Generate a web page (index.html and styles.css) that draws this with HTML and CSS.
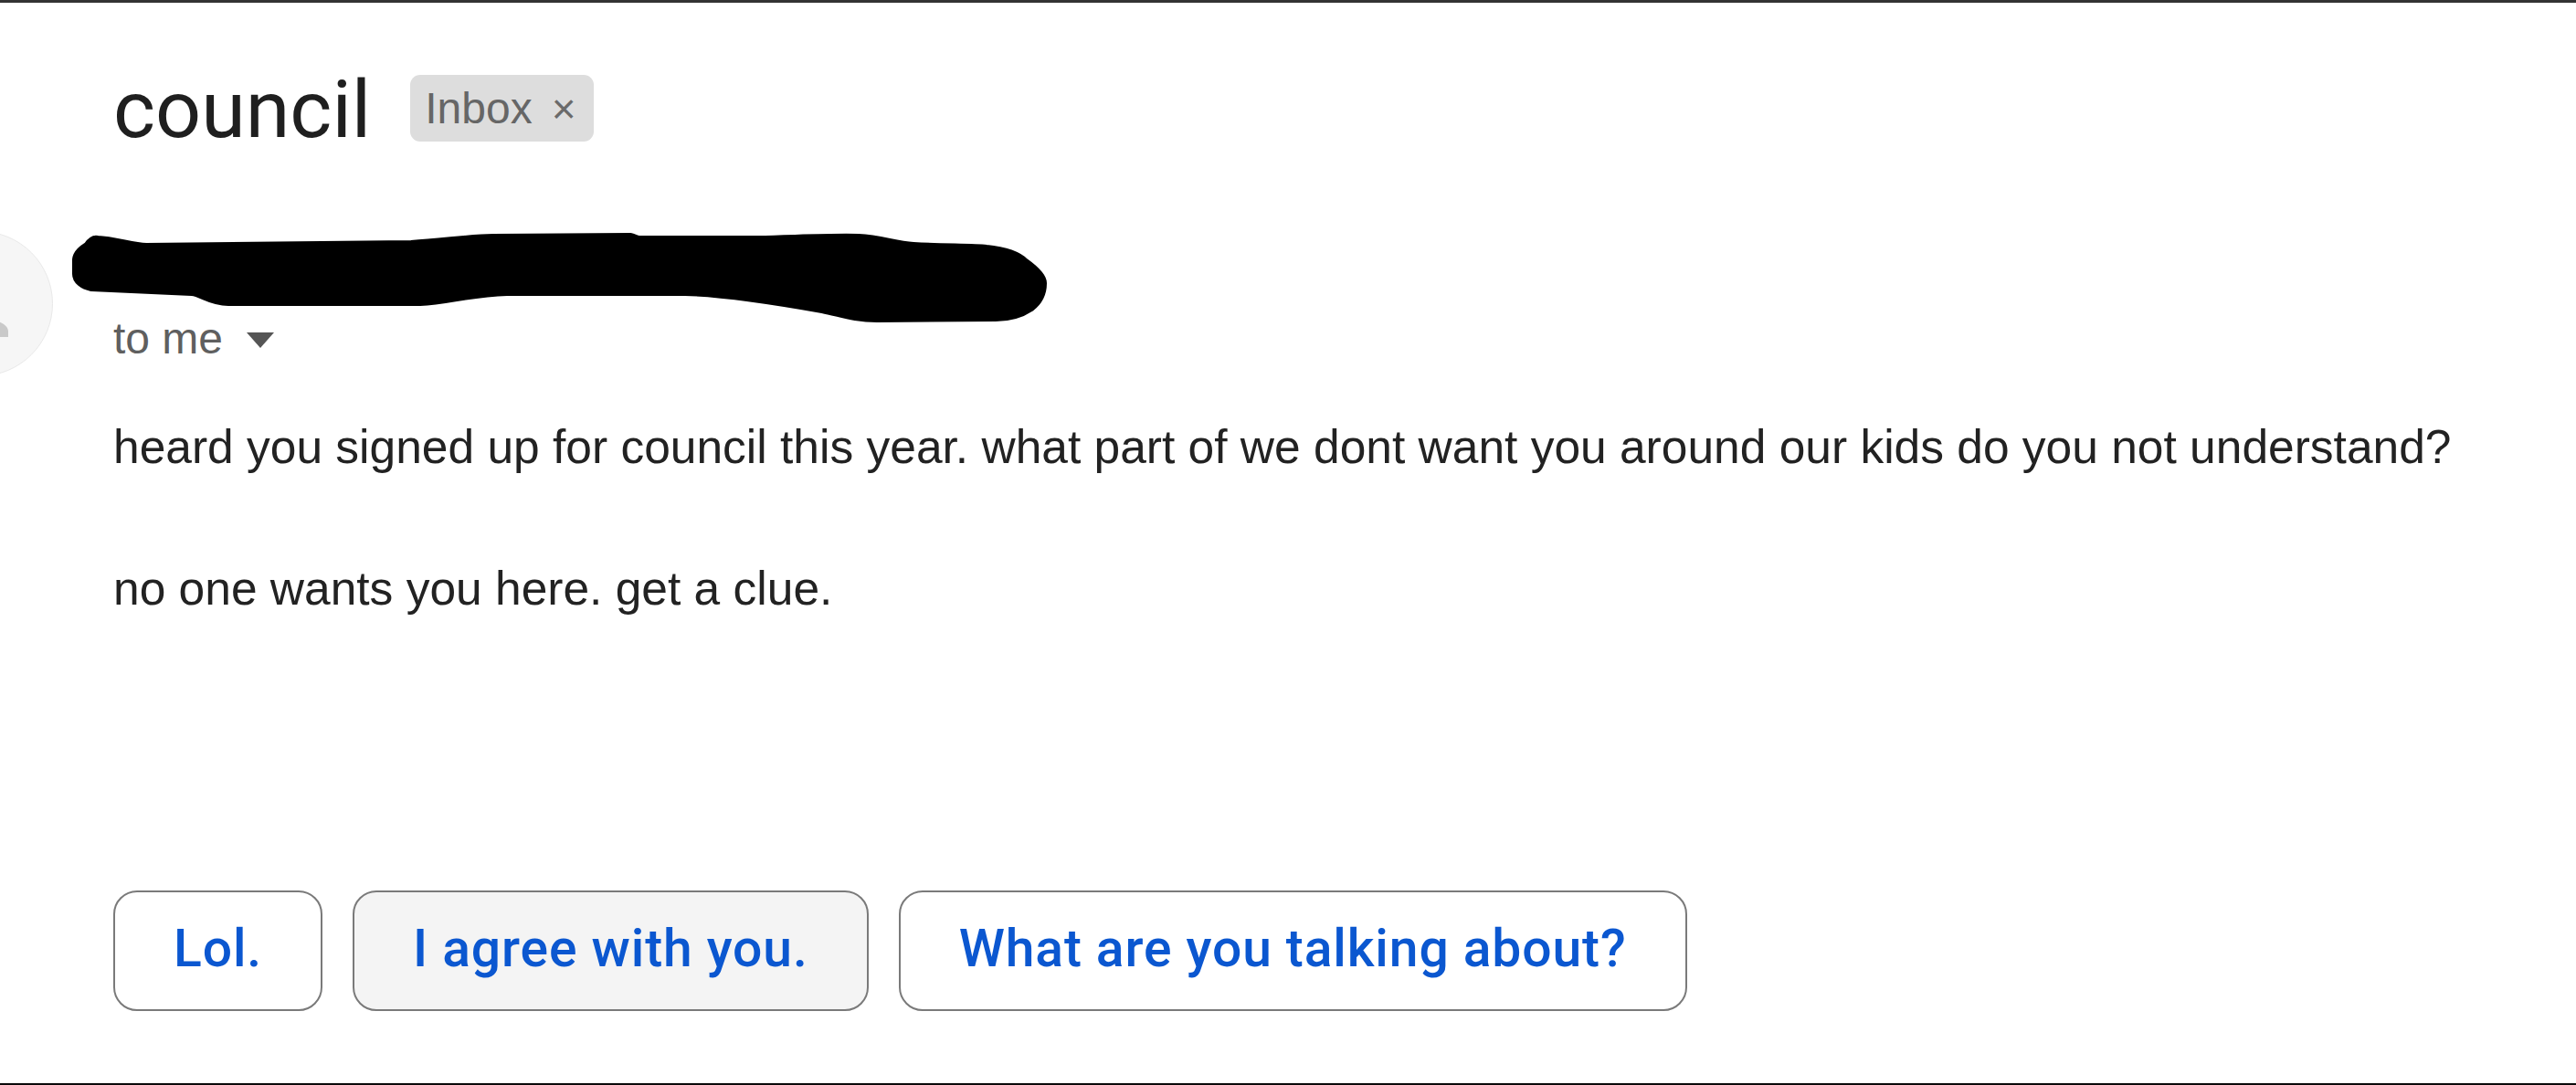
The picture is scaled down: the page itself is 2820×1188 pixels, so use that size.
FILE: index.html
```html
<!DOCTYPE html>
<html lang="en">
<head>
<meta charset="utf-8">
<title>council</title>
<link rel="stylesheet" href="styles.css">
</head>
<body>
<div class="frame">
  <div class="subject">
    <h1 class="title">council</h1>
    <span class="chip"><span class="chip-label">Inbox</span><span class="chip-x">×</span></span>
  </div>

  <div class="sender">
    <div class="avatar">
      <svg class="avatar-icon" viewBox="0 0 159 159" width="159" height="159">
        <circle cx="80" cy="72" r="15" fill="#c9c9c9"/>
        <path d="M50 116 v-6 c0-9 14-14 30-14 s30 5 30 14 v6 z" fill="#c9c9c9"/>
      </svg>
    </div>
    <div class="sender-info">
      <svg class="redact" viewBox="0 0 1075 103" width="1075" height="103">
        <path d="M32 9 C50 10 70 16 85 17 L375 14 C410 12 440 7 465 7 L615 6 C620 7 622 9 625 9 L755 9 C800 8 840 6 865 7 C890 8 905 15 925 16 C960 18 990 17 1005 19 C1025 21 1040 26 1048 34 C1062 44 1068 52 1068 58 C1068 70 1062 80 1054 86 C1042 94 1030 97 1015 97 L885 98 C860 98 845 92 825 88 C780 80 720 70 675 69 L480 69 C440 70 415 79 385 80 L175 80 C155 80 145 70 135 69 L25 64 C15 62 7 56 7 48 L7 32 C8 24 14 20 20 16 C24 10 28 8 32 9 Z" fill="#000" stroke="#000" stroke-width="6" stroke-linejoin="round"/>
      </svg>
      <div class="recipients">to me <span class="caret"></span></div>
    </div>
  </div>

  <div class="body">
    <div class="line">heard you signed up for council this year. what part of we dont want you around our kids do you not understand?</div>
    <div class="line"><br></div>
    <div class="line">no one wants you here. get a clue.</div>
  </div>

  <div class="replies">
    <button class="reply">Lol.</button>
    <button class="reply reply-hover">I agree with you.</button>
    <button class="reply">What are you talking about?</button>
  </div>
</div>
</body>
</html>
```

FILE: styles.css
```css
html, body {
  margin: 0;
  padding: 0;
  background: #ffffff;
}

.frame {
  box-sizing: border-box;
  width: 2820px;
  height: 1188px;
  border-top: 3px solid #333333;
  border-bottom: 2px solid #0a0a0a;
  overflow: hidden;
  background: #ffffff;
}

.subject {
  display: flex;
  align-items: center;
  height: 100px;
  margin-top: 67px;
  padding-left: 124px;
  gap: 43px;
}

.title {
  margin: 0;
  font-family: Roboto, "Noto Sans", sans-serif;
  font-weight: 400;
  font-size: 88px;
  line-height: 100px;
  color: #1f1f1f;
}

.chip {
  display: flex;
  align-items: center;
  gap: 21px;
  height: 73px;
  margin-top: -3px;
  padding: 0 19px 0 16px;
  box-sizing: border-box;
  background: #dddddd;
  border-radius: 11px;
  font-family: "Liberation Sans", Arial, sans-serif;
  font-size: 48px;
  color: #666666;
}

.chip-x {
  font-size: 46px;
  color: #6a6a6a;
}

.sender {
  display: flex;
  align-items: flex-start;
  gap: 66px;
  margin-top: 82px;
}

.avatar {
  flex: none;
  width: 159px;
  height: 159px;
  margin-left: -101px;
  margin-top: 1px;
  box-sizing: border-box;
  border-radius: 50%;
  background: #f6f6f6;
  border: 1px solid #e9e9e9;
  overflow: hidden;
}

.avatar-icon {
  display: block;
  margin: -1px;
}

.sender-info {
  display: flex;
  flex-direction: column;
}

.redact {
  display: block;
  margin-left: -49px;
}

.recipients {
  margin-top: -12px;
  font-family: "Liberation Sans", Arial, sans-serif;
  font-size: 48px;
  line-height: 55px;
  color: #5f5f5f;
  display: flex;
  align-items: center;
  gap: 26px;
}

.caret {
  width: 0;
  height: 0;
  border-left: 15px solid transparent;
  border-right: 15px solid transparent;
  border-top: 17px solid #555555;
  margin-top: 4px;
}

.body {
  margin-top: 39px;
  padding-left: 124px;
  font-family: "Liberation Sans", Arial, sans-serif;
  font-size: 51.5px;
  line-height: 77.5px;
  color: #222222;
}

.replies {
  display: flex;
  gap: 33px;
  padding-left: 124px;
  margin-top: 291px;
}

.reply {
  box-sizing: border-box;
  height: 132px;
  padding: 0 64px 4px;
  border: 2px solid #7a7a7a;
  border-radius: 26px;
  background: #ffffff;
  font-family: Roboto, "Noto Sans", sans-serif;
  font-weight: 500;
  font-size: 57px;
  letter-spacing: 0.9px;
  color: #0b57d0;
  cursor: pointer;
}

.reply-hover {
  background: #f4f4f4;
}
```
